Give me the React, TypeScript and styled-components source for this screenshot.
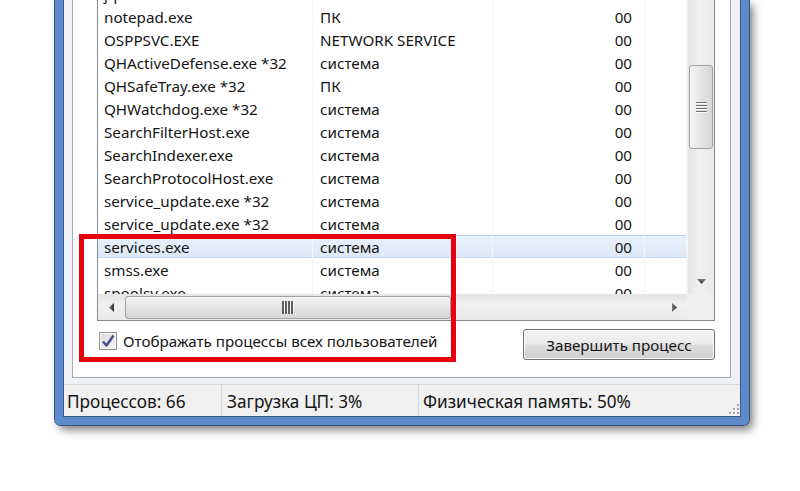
import React from 'react';
import styled, { createGlobalStyle, css } from 'styled-components';

const Global = createGlobalStyle`
  html, body { margin: 0; padding: 0; background: #ffffff; }
  body { font-family: "Noto Sans", "Liberation Sans", sans-serif; color: #151515; }
  * { box-sizing: border-box; }
`;

const FONT = css`
  font-family: "Noto Sans", "Liberation Sans", sans-serif;
  font-size: 15.2px;
  color: #151515;
`;

const Page = styled.div`
  position: relative;
  width: 800px;
  height: 491px;
  overflow: hidden;
  background: #ffffff;
  padding-left: 55px;
`;

const Window = styled.div`
  width: 694px;
  border: 8px solid #5d8acb;
  border-top: none;
  border-radius: 0 0 6px 6px;
  box-shadow: 0 0 0 1px #34527e, 4px 5px 9px rgba(0, 0, 0, 0.5);
`;

const Body = styled.div`
  border: 1px solid #36598c;
  border-top: none;
  background: #eff1f4;
  display: flex;
  flex-direction: column;
`;

const TabPanel = styled.div`
  margin: 0 9px 0 8px;
  background: #ffffff;
  border: 1px solid #a3abb6;
  border-top: none;
  padding: 0 15px 17px 24px;
  display: flex;
  flex-direction: column;
`;

const ListView = styled.div`
  border: 1px solid #828790;
  border-top: none;
  height: 321px;
  display: grid;
  grid-template-columns: 1fr 27px;
  grid-template-rows: 1fr 26px;
  background: #ffffff;
`;

const RowsViewport = styled.div`
  overflow: hidden;
  position: relative;
`;

const RowsInner = styled.div`
  margin-top: -18px;
`;

const Row = styled.div<{ $selected?: boolean }>`
  ${FONT};
  height: 23px;
  display: grid;
  grid-template-columns: 215px 180px 152px 1fr;
  align-items: center;
  white-space: nowrap;
  ${p =>
    p.$selected &&
    css`
      background: linear-gradient(#e9f1fc, #dde8f8);
      box-shadow: inset 0 1px 0 #b7cbe6, inset 0 -1px 0 #c9d9ef;
    `}
`;

const Cell = styled.div<{ $align?: 'left' | 'right'; $pad?: number }>`
  height: 100%;
  display: flex;
  align-items: center;
  justify-content: ${p => (p.$align === 'right' ? 'flex-end' : 'flex-start')};
  padding-left: ${p => (p.$align === 'right' ? 0 : p.$pad ?? 6)}px;
  padding-right: ${p => (p.$align === 'right' ? p.$pad ?? 12 : 0)}px;
  border-right: 1px solid #f4f5f7;
  overflow: hidden;
`;

const VScroll = styled.div`
  background: linear-gradient(to right, #e4e4e4, #f0f0f0 40%, #eaeaea);
  border-left: 1px solid #f3f3f3;
  display: flex;
  flex-direction: column;
  align-items: center;
`;

const HScroll = styled.div`
  background: linear-gradient(#e4e4e4, #f0f0f0 40%, #eaeaea);
  display: flex;
  align-items: center;
`;

const Corner = styled.div`
  background: #efefef;
`;

const VThumb = styled.div`
  margin-top: 65px;
  width: 24px;
  height: 84px;
  border: 1px solid #a2a2a2;
  border-radius: 3px;
  background: linear-gradient(to right, #f4f4f4, #e4e4e4 50%, #d6d6d6);
  display: flex;
  align-items: center;
  justify-content: center;
`;

const HThumb = styled.div`
  margin-left: 1px;
  width: 326px;
  height: 23px;
  border: 1px solid #a2a2a2;
  border-radius: 3px;
  background: linear-gradient(#f4f4f4, #e4e4e4 50%, #d6d6d6);
  display: flex;
  align-items: center;
  justify-content: center;
`;

const Spacer = styled.div`
  flex: 1;
`;

const ArrowButton = styled.div<{ $w: number; $h: number }>`
  width: ${p => p.$w}px;
  height: ${p => p.$h}px;
  display: flex;
  align-items: center;
  justify-content: center;
  flex-shrink: 0;
`;

const Controls = styled.div`
  margin-top: 8px;
  height: 31px;
  display: flex;
  justify-content: space-between;
  align-items: flex-start;
`;

const CheckLabel = styled.label`
  ${FONT};
  margin-top: 3px;
  margin-left: 2px;
  display: flex;
  align-items: center;
  gap: 6px;
  white-space: nowrap;
  line-height: 18px;
`;

const CheckBox = styled.span`
  width: 18px;
  height: 18px;
  border: 1px solid #8e8f8f;
  background: linear-gradient(135deg, #d9d9d9, #f6f6f6);
  box-shadow: inset 0 0 0 1px #ffffff;
  display: flex;
  align-items: center;
  justify-content: center;
`;

const Button = styled.button`
  ${FONT};
  width: 192px;
  height: 31px;
  border: 1px solid #707070;
  border-radius: 3px;
  background: linear-gradient(#f3f3f3 0%, #ebebeb 48%, #dddddd 52%, #cfcfcf 100%);
  box-shadow: inset 0 0 0 1px #fbfbfb;
  padding: 0;
  padding-top: 1px;
`;

const StatusBar = styled.div`
  margin-top: 6px;
  border-top: 1px solid #d4d7dc;
  height: 32px;
  background: #f0f0f0;
  display: flex;
  align-items: stretch;
  position: relative;
`;

const StatusCell = styled.div<{ $w?: number; $pad: number }>`
  font-family: "Noto Sans", "Liberation Sans", sans-serif;
  font-size: 17.2px;
  color: #151515;
  width: ${p => (p.$w ? `${p.$w}px` : 'auto')};
  flex: ${p => (p.$w ? '0 0 auto' : '1')};
  padding: 2px 0 0 ${p => p.$pad}px;
  display: flex;
  align-items: center;
  border-right: ${p => (p.$w ? '1px solid #d8d8d8' : 'none')};
  white-space: nowrap;
`;

const Grip = styled.svg`
  position: absolute;
  right: 1px;
  bottom: 2px;
`;

const RedFrame = styled.div`
  position: absolute;
  left: 79px;
  top: 234px;
  width: 377px;
  height: 128px;
  border: 5px solid #e8000c;
  pointer-events: none;
`;

type Proc = { name: string; user: string; cpu: string; selected?: boolean };

const procs: Proc[] = [
  { name: 'jqs.exe', user: 'система', cpu: '00' },
  { name: 'notepad.exe', user: 'ПК', cpu: '00' },
  { name: 'OSPPSVC.EXE', user: 'NETWORK SERVICE', cpu: '00' },
  { name: 'QHActiveDefense.exe *32', user: 'система', cpu: '00' },
  { name: 'QHSafeTray.exe *32', user: 'ПК', cpu: '00' },
  { name: 'QHWatchdog.exe *32', user: 'система', cpu: '00' },
  { name: 'SearchFilterHost.exe', user: 'система', cpu: '00' },
  { name: 'SearchIndexer.exe', user: 'система', cpu: '00' },
  { name: 'SearchProtocolHost.exe', user: 'система', cpu: '00' },
  { name: 'service_update.exe *32', user: 'система', cpu: '00' },
  { name: 'service_update.exe *32', user: 'система', cpu: '00' },
  { name: 'services.exe', user: 'система', cpu: '00', selected: true },
  { name: 'smss.exe', user: 'система', cpu: '00' },
  { name: 'spoolsv.exe', user: 'система', cpu: '00' },
];

const VGrip = () => (
  <svg width="11" height="11" viewBox="0 0 11 11">
    {[1, 4, 7, 10].map(y => (
      <g key={y}>
        <rect x="0" y={y - 1} width="11" height="1" fill="#6f6f6f" />
        <rect x="0" y={y} width="11" height="1" fill="#fafafa" />
      </g>
    ))}
  </svg>
);

const HGrip = () => (
  <svg width="13" height="13" viewBox="0 0 13 13">
    {[1, 4, 7, 10].map(x => (
      <g key={x}>
        <rect x={x - 1} y="0" width="2" height="13" fill="#5e5e5e" />
        <rect x={x + 1} y="0" width="1" height="13" fill="#f6f6f6" />
      </g>
    ))}
  </svg>
);

const Tri = ({ dir }: { dir: 'down' | 'left' | 'right' }) => {
  const pts =
    dir === 'down' ? '0,0 9,0 4.5,5' : dir === 'left' ? '5,0 5,9 0,4.5' : '0,0 0,9 5,4.5';
  const w = dir === 'down' ? 9 : 5;
  const h = dir === 'down' ? 5 : 9;
  return (
    <svg width={w} height={h} viewBox={`0 0 ${w} ${h}`}>
      <defs>
        <linearGradient id={`g${dir}`} x1="0" y1="0" x2={dir === 'down' ? '0' : '1'} y2={dir === 'down' ? '1' : '0'}>
          <stop offset="0" stopColor="#7a7a7a" />
          <stop offset="1" stopColor="#2e2e2e" />
        </linearGradient>
      </defs>
      <polygon points={pts} fill={`url(#g${dir})`} />
    </svg>
  );
};

export default function App() {
  return (
    <Page>
      <Global />
      <Window>
        <Body>
          <TabPanel>
            <ListView>
              <RowsViewport>
                <RowsInner>
                  {procs.map((p, i) => (
                    <Row key={i} $selected={p.selected}>
                      <Cell $pad={6}>{p.name}</Cell>
                      <Cell $pad={7}>{p.user}</Cell>
                      <Cell $align="right" $pad={12}>
                        {p.cpu}
                      </Cell>
                      <Cell />
                    </Row>
                  ))}
                </RowsInner>
              </RowsViewport>
              <VScroll>
                <VThumb>
                  <VGrip />
                </VThumb>
                <Spacer />
                <ArrowButton $w={26} $h={26}>
                  <Tri dir="down" />
                </ArrowButton>
              </VScroll>
              <HScroll>
                <ArrowButton $w={26} $h={26}>
                  <Tri dir="left" />
                </ArrowButton>
                <HThumb>
                  <HGrip />
                </HThumb>
                <Spacer />
                <ArrowButton $w={26} $h={26}>
                  <Tri dir="right" />
                </ArrowButton>
              </HScroll>
              <Corner />
            </ListView>
            <Controls>
              <CheckLabel>
                <CheckBox>
                  <svg width="14" height="14" viewBox="0 0 14 14">
                    <path d="M2 7.5 L5.5 11.5 L12.5 1.5" fill="none" stroke="#3f4f8c" strokeWidth="2.4" strokeLinejoin="round" />
                  </svg>
                </CheckBox>
                Отображать процессы всех пользователей
              </CheckLabel>
              <Button>Завершить процесс</Button>
            </Controls>
          </TabPanel>
          <StatusBar>
            <StatusCell $w={158} $pad={3}>Процессов: 66</StatusCell>
            <StatusCell $w={197} $pad={5}>Загрузка ЦП: 3%</StatusCell>
            <StatusCell $pad={4}>Физическая память: 50%</StatusCell>
            <Grip width="10" height="10" viewBox="0 0 10 10">
              {[
                [8, 0],
                [8, 4],
                [4, 4],
                [8, 8],
                [4, 8],
                [0, 8],
              ].map(([x, y], i) => (
                <g key={i}>
                  <rect x={x + 1} y={y + 1} width="2" height="2" fill="#ffffff" />
                  <rect x={x} y={y} width="2" height="2" fill="#a0a4aa" />
                </g>
              ))}
            </Grip>
          </StatusBar>
        </Body>
      </Window>
      <RedFrame />
    </Page>
  );
}
